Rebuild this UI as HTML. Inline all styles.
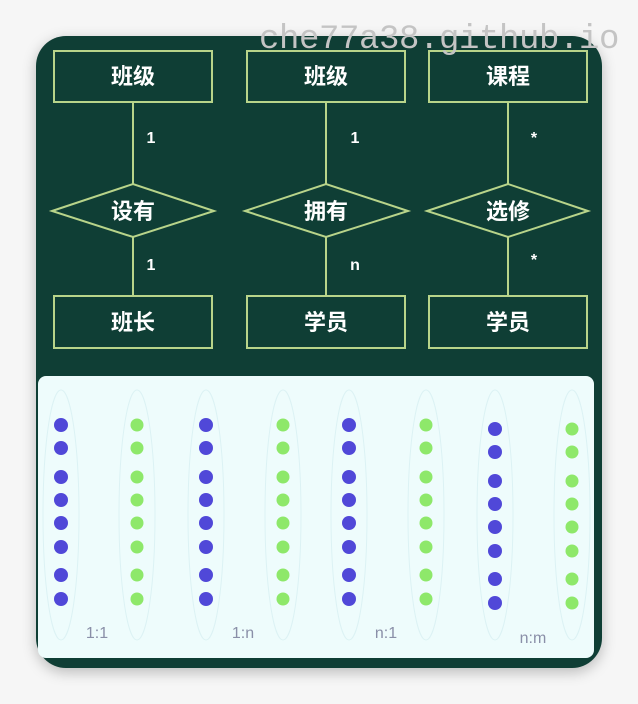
<!DOCTYPE html>
<html><head><meta charset="utf-8"><style>
body{margin:0;width:638px;height:704px;background:#f6f6f6;position:relative;overflow:hidden;font-family:"Liberation Sans","Noto Sans CJK SC",sans-serif}
.card{position:absolute;left:36px;top:36px;width:566px;height:632px;border-radius:30px;background:#0f3e35;box-shadow:0 4px 14px rgba(0,0,0,.25)}
.panel{position:absolute;left:38px;top:376px;width:556px;height:282px;background:#eefcfc;border-radius:8px}
.wm{position:absolute;left:259px;top:21px;font-family:"Liberation Mono",monospace;font-size:34px;color:#c4c4c4;letter-spacing:-0.4px}
</style></head><body>
<div class="card"></div>
<svg width="638" height="704" style="position:absolute;left:0;top:0" font-family="Liberation Sans, Noto Sans CJK SC, sans-serif">
<g fill="none" stroke="#b8d48a" stroke-width="2">
<rect x="54" y="51" width="158" height="51"/><rect x="247" y="51" width="158" height="51"/><rect x="429" y="51" width="158" height="51"/>
<rect x="54" y="296" width="158" height="52"/><rect x="247" y="296" width="158" height="52"/><rect x="429" y="296" width="158" height="52"/>
<polygon points="52,211 133,184 214,211 133,237"/><polygon points="245,211 326,184 408,211 326,237"/><polygon points="427,211 508,184 588,211 508,237"/>
<path d="M133 102V184M133 237V296M326 102V184M326 237V296M508 102V184M508 237V296"/>
</g>
<g fill="#fff" font-size="22" font-weight="bold" text-anchor="middle">
<text x="133" y="84">班级</text><text x="326" y="84">班级</text><text x="508" y="84">课程</text>
<text x="133" y="219">设有</text><text x="326" y="219">拥有</text><text x="508" y="219">选修</text>
<text x="133" y="330">班长</text><text x="326" y="330">学员</text><text x="508" y="330">学员</text>
</g>
<g fill="#fff" font-size="16" font-weight="bold" text-anchor="middle">
<text x="151" y="143">1</text><text x="355" y="143">1</text><text x="534" y="143">*</text>
<text x="151" y="270">1</text><text x="355" y="270">n</text><text x="534" y="265">*</text>
</g>
</svg>
<div class="panel"></div>
<svg width="638" height="704" style="position:absolute;left:0;top:0">
<g fill="none" stroke="#dcf2f4" stroke-width="1">
<ellipse cx="61" cy="515" rx="18" ry="125"/><ellipse cx="137" cy="515" rx="18" ry="125"/>
<ellipse cx="206" cy="515" rx="18" ry="125"/><ellipse cx="283" cy="515" rx="18" ry="125"/>
<ellipse cx="349" cy="515" rx="18" ry="125"/><ellipse cx="426" cy="515" rx="18" ry="125"/>
<ellipse cx="495" cy="515" rx="18" ry="125"/><ellipse cx="572" cy="515" rx="18" ry="125"/>
</g>
<g id="b" fill="#5048d8">
<circle cx="61" cy="425" r="7"/><circle cx="61" cy="448" r="7"/><circle cx="61" cy="477" r="7"/><circle cx="61" cy="500" r="7"/><circle cx="61" cy="523" r="7"/><circle cx="61" cy="547" r="7"/><circle cx="61" cy="575" r="7"/><circle cx="61" cy="599" r="7"/>
</g>
<use href="#b" x="145"/><use href="#b" x="288"/><use href="#b" x="434" y="4"/>
<g id="g" fill="#8ee86a">
<circle cx="137" cy="425" r="6.5"/><circle cx="137" cy="448" r="6.5"/><circle cx="137" cy="477" r="6.5"/><circle cx="137" cy="500" r="6.5"/><circle cx="137" cy="523" r="6.5"/><circle cx="137" cy="547" r="6.5"/><circle cx="137" cy="575" r="6.5"/><circle cx="137" cy="599" r="6.5"/>
</g>
<use href="#g" x="146"/><use href="#g" x="289"/><use href="#g" x="435" y="4"/>
<g fill="#8a8fa8" font-family="Liberation Sans, sans-serif" font-size="16" text-anchor="middle">
<text x="97" y="638">1:1</text><text x="243" y="638">1:n</text><text x="386" y="638">n:1</text><text x="533" y="643">n:m</text>
</g>
</svg>
<div class="wm">che77a38.github.io</div>
</body></html>
